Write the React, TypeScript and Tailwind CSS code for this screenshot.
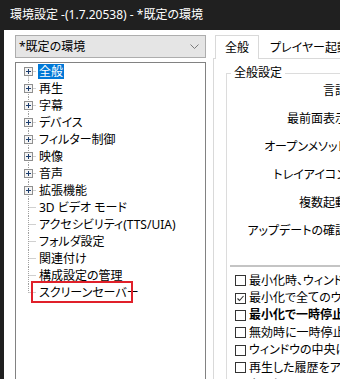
import React from 'react';

const font = "font-['Noto_Sans','Noto_Sans_CJK_JP',sans-serif] [font-feature-settings:'palt']";

const treeItems = [
  { label: '全般', plus: true, selected: true },
  { label: '再生', plus: true },
  { label: '字幕', plus: true },
  { label: 'デバイス', plus: true },
  { label: 'フィルター制御', plus: true },
  { label: '映像', plus: true },
  { label: '音声', plus: true },
  { label: '拡張機能', plus: true },
  { label: '3D ビデオ モード' },
  { label: 'アクセシビリティ(TTS/UIA)' },
  { label: 'フォルダ設定' },
  { label: '関連付け' },
  { label: '構成設定の管理' },
  { label: 'スクリーンセーバー', marked: true },
];

const settingLabels = ['言語', '最前面表示', 'オープンメソッド', 'トレイアイコン', '複数起動', 'アップデートの確認'];

const checks = [
  { label: '最小化時、ウィンドウを隠す' },
  { label: '最小化で全てのウィンドウを', checked: true },
  { label: '最小化で一時停止', bold: true },
  { label: '無効時に一時停止する' },
  { label: 'ウィンドウの中央に合わせる' },
  { label: '再生した履歴をアルバムに' },
  { label: 'タスクバーのサムネイル' },
];

// connector lines + expand box for one tree row
const TreeGlyph = ({ plus, first, last }: { plus?: boolean; first?: boolean; last?: boolean }) => (
  <svg width="16" height="17" viewBox="0 0 16 17" className="shrink-0">
    <line x1="8.5" y1={first ? 8.5 : 0} x2="8.5" y2={last ? 8.5 : 17} stroke="#a0a0a0" strokeDasharray="1 1" />
    <line x1="8.5" y1="8.5" x2="16" y2="8.5" stroke="#a0a0a0" strokeDasharray="1 1" />
    {plus && (
      <g>
        <rect x="4.5" y="4.5" width="8" height="8" fill="#f4f4f4" stroke="#8f8f8f" />
        <line x1="6" y1="8.5" x2="11" y2="8.5" stroke="#1c3d6e" />
        <line x1="8.5" y1="6" x2="8.5" y2="11" stroke="#1c3d6e" />
      </g>
    )}
  </svg>
);

const CheckBox = ({ checked }: { checked?: boolean }) => (
  <svg width="11" height="11" viewBox="0 0 11 11" className="shrink-0">
    <rect x="0.5" y="0.5" width="10" height="10" fill="#fff" stroke="#333" />
    {checked && <polyline points="2.5,5.5 4.5,7.5 8.5,3" fill="none" stroke="#333" strokeWidth="1.1" />}
  </svg>
);

export default function App() {
  return (
    <div className={`w-[340px] h-[379px] overflow-hidden bg-white flex flex-col ${font}`}>
      <div className="h-[30px] shrink-0 bg-[#202020] text-white text-[12px] flex items-center pl-[10px]">
        環境設定 -(1.7.20538) - *既定の環境
      </div>

      <div className="flex-1 flex border-l-4 border-[#202020] pl-[11px] pt-[5px] w-[440px]">
        {/* left column */}
        <div className="w-[191px] shrink-0 flex flex-col gap-[4px]">
          <div className="h-[23px] bg-[#e5e5e5] border border-[#adadad] flex items-center pl-[3px] pr-[6px] text-[12px] text-black">
            <span className="flex-1">*既定の環境</span>
            <svg width="9" height="6" viewBox="0 0 9 6">
              <polyline points="0.5,0.5 4.5,4.5 8.5,0.5" fill="none" stroke="#7a7a7a" />
            </svg>
          </div>
          <div className="flex-1 border border-[#828282] bg-white pl-[4px]">
            {treeItems.map((it, i) => (
              <div key={i} className="relative h-[17px] flex items-center text-[12px] text-black">
                <TreeGlyph plus={it.plus} first={i === 0} last={i === treeItems.length - 1} />
                <span
                  className={`ml-[2px] px-[1px] leading-[15px] ${it.selected ? 'bg-[#0078d7] text-white' : ''}`}
                >
                  {it.label}
                </span>
                {it.marked && (
                  <div className="absolute left-[11px] top-[-3px] w-[102px] h-[22px] border-2 border-[#e0202a]" />
                )}
              </div>
            ))}
          </div>
        </div>

        {/* right column */}
        <div className="ml-[7px] flex-1 flex flex-col">
          <div className="h-[23px] flex items-end pl-[2px] text-[12px]">
            <div className="h-[24px] -mb-px z-10 w-[44px] bg-white border border-b-0 border-[#d9d9d9] flex items-center justify-center text-black">
              全般
            </div>
            <div className="h-[21px] pl-[11px] flex items-center text-black">プレイヤー起動</div>
          </div>
          <div className="flex-1 border border-[#d9d9d9] bg-white pl-[12px] pt-[7px]">
            <fieldset className="border border-[#dcdcdc] h-[400px]">
              <legend className="ml-[4px] px-[3px] text-[12px] text-black leading-[14px]">全般設定</legend>
              <div className="flex flex-col items-end w-[120px] -mt-[3px]">
                {settingLabels.map((l) => (
                  <div key={l} className="h-[28px] flex items-center text-[12px] text-black whitespace-nowrap">
                    {l}
                  </div>
                ))}
              </div>
              <div className="mt-[20px] ml-[3px] h-[2px] bg-[#c4c4c4]" />
              <div className="pl-[8px] pt-[5px] flex flex-col">
                {checks.map((c) => (
                  <div key={c.label} className="h-[17.4px] flex items-center gap-[3px] text-[12px] text-black whitespace-nowrap">
                    <CheckBox checked={c.checked} />
                    <span className={c.bold ? 'font-bold' : ''}>{c.label}</span>
                  </div>
                ))}
              </div>
            </fieldset>
          </div>
        </div>
      </div>
    </div>
  );
}
